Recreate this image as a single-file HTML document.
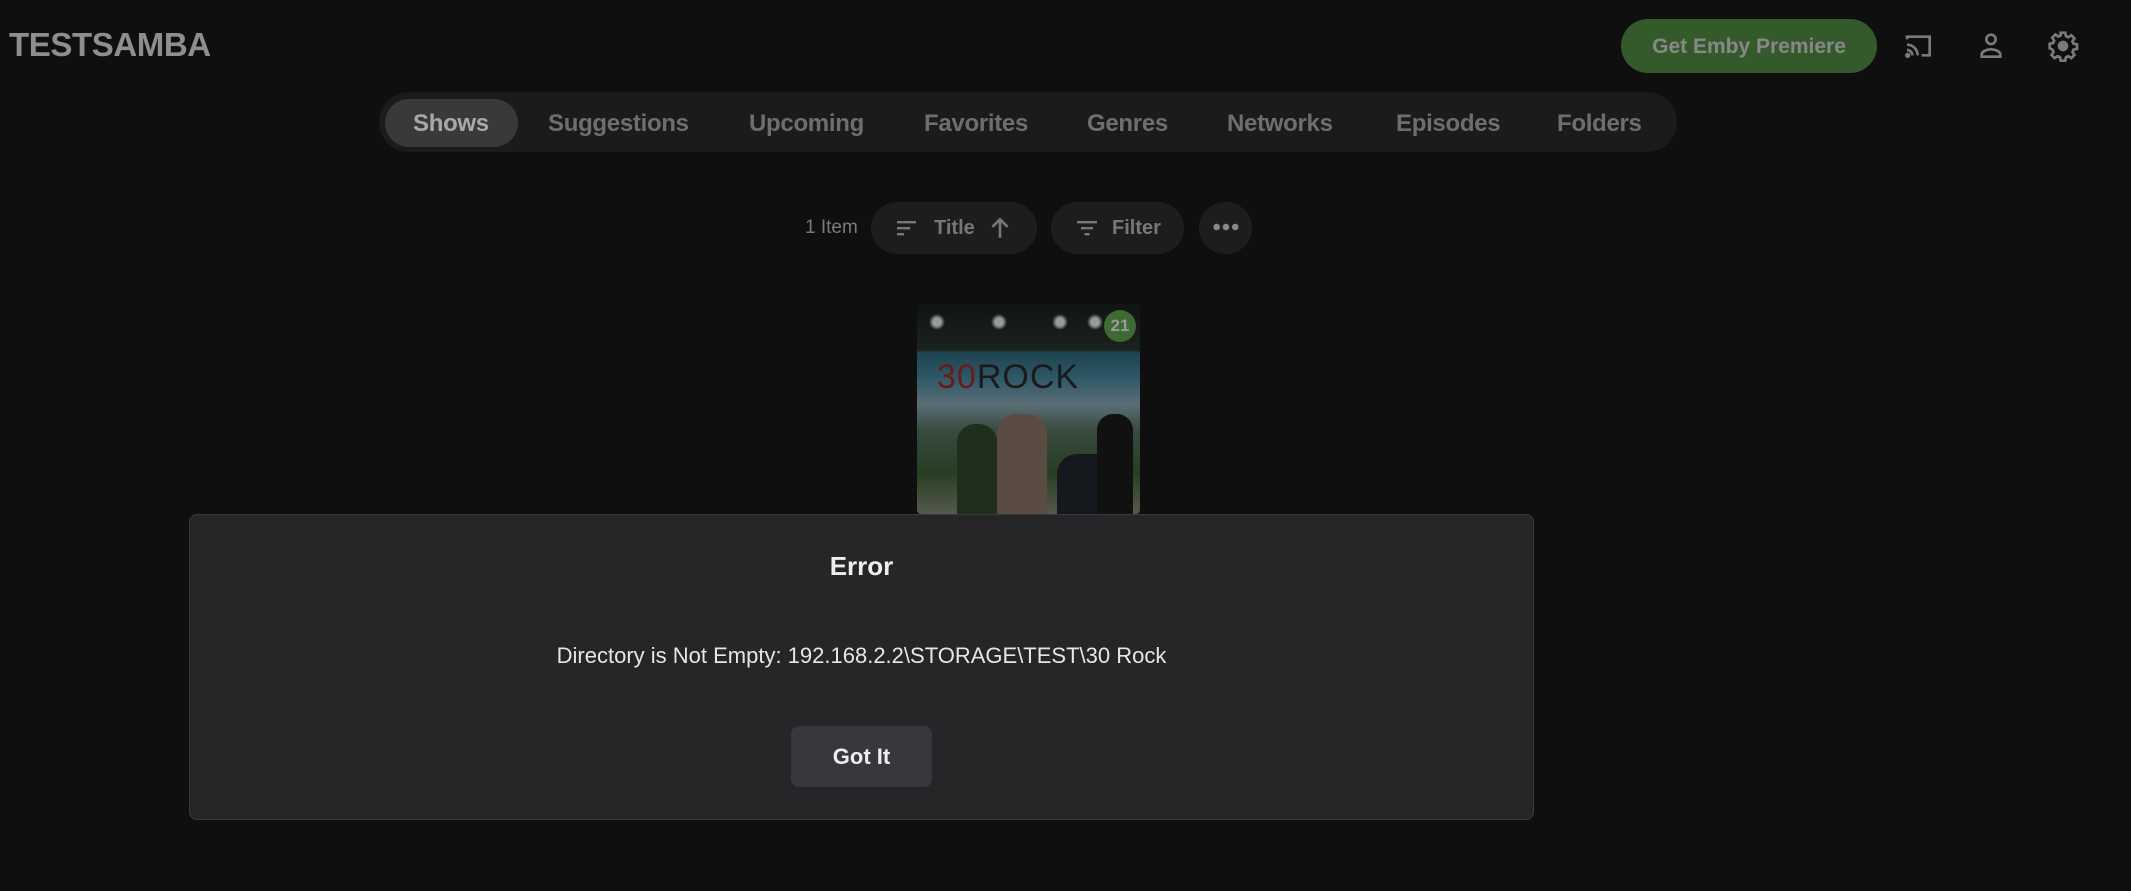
<!DOCTYPE html>
<html><head><meta charset="utf-8"><style>
*{margin:0;padding:0;box-sizing:border-box}
body{width:2131px;height:891px;background:#0f0f0f;font-family:"Liberation Sans",sans-serif;position:relative;overflow:hidden}
.a{position:absolute}
.logo{left:9px;top:26px;font-size:33px;font-weight:bold;color:#8e8e8e;letter-spacing:-0.4px}
.prem{left:1621px;top:19px;width:256px;height:54px;border-radius:27px;background:#345a2c;color:#888;font-weight:bold;font-size:21px;text-align:center;line-height:56px}
.tabs{left:379px;top:92px;width:1298px;height:60px;border-radius:30px;background:#1b1b1b}
.pill{left:385px;top:99px;width:133px;height:48px;border-radius:24px;background:#393939}
.tab{top:110px;font-size:24px;font-weight:bold;color:#6e6e6e;letter-spacing:-0.3px}
.btn{background:#1d1d1d;border-radius:26px;height:52px;top:202px}
.dlg{left:189px;top:514px;width:1345px;height:306px;background:#262628;border:1px solid #3a3a3d;border-radius:8px}
</style></head><body>
<div class="a logo">TESTSAMBA</div>
<div class="a prem">Get Emby Premiere</div>
<svg class="a" style="left:1903px;top:30px" width="32" height="32" viewBox="0 0 24 24" fill="none" stroke="#7a7a7a" stroke-width="2"><path d="M3 7V5h17v14h-6"/><path d="M3 11a8 8 0 0 1 8 8M3 15a4 4 0 0 1 4 4"/><circle cx="3.5" cy="19" r="1" fill="#7a7a7a"/></svg>
<svg class="a" style="left:1975px;top:30px" width="32" height="32" viewBox="0 0 24 24" fill="none" stroke="#7a7a7a" stroke-width="2"><circle cx="12" cy="7" r="3.5"/><path d="M5 20v-1.5C5 16 9 14.5 12 14.5s7 1.5 7 4V20z"/></svg>
<svg class="a" style="left:2047px;top:30px" width="32" height="32" viewBox="0 0 24 24" fill="none" stroke="#7a7a7a" stroke-width="2"><circle cx="12" cy="12" r="3" fill="#7a7a7a"/><path d="M10.3 2h3.4l.5 2.6 1.8.8 2.2-1.5 2.4 2.4-1.5 2.2.8 1.8 2.6.5v3.4l-2.6.5-.8 1.8 1.5 2.2-2.4 2.4-2.2-1.5-1.8.8-.5 2.6h-3.4l-.5-2.6-1.8-.8-2.2 1.5-2.4-2.4 1.5-2.2-.8-1.8L2 13.7v-3.4l2.6-.5.8-1.8-1.5-2.2 2.4-2.4 2.2 1.5 1.8-.8z"/></svg>
<div class="a tabs"></div>
<div class="a pill"></div>
<div class="a tab" style="left:413px;color:#a8a8a8">Shows</div>
<div class="a tab" style="left:548px">Suggestions</div>
<div class="a tab" style="left:749px">Upcoming</div>
<div class="a tab" style="left:924px">Favorites</div>
<div class="a tab" style="left:1087px">Genres</div>
<div class="a tab" style="left:1227px">Networks</div>
<div class="a tab" style="left:1396px">Episodes</div>
<div class="a tab" style="left:1557px">Folders</div>
<div class="a" style="left:805px;top:217px;font-size:19px;color:#7a7a7a">1 Item</div>
<div class="a btn" style="left:871px;width:166px"></div>
<div class="a btn" style="left:1051px;width:133px"></div>
<div class="a btn" style="left:1199px;width:53px"></div>
<svg class="a" style="left:894px;top:216px" width="26" height="24" viewBox="0 0 24 24" fill="#777"><rect x="2" y="5" width="19" height="2.4"/><rect x="2" y="11" width="13" height="2.4"/><rect x="2" y="17" width="7" height="2.4"/></svg>
<div class="a" style="left:934px;top:217px;font-size:20px;font-weight:bold;color:#777">Title</div>
<svg class="a" style="left:987px;top:215px" width="26" height="26" viewBox="0 0 24 24" fill="none" stroke="#777" stroke-width="2.4"><path d="M12 21V4M5 11l7-7 7 7"/></svg>
<svg class="a" style="left:1074px;top:216px" width="26" height="24" viewBox="0 0 24 24" fill="#777"><rect x="2" y="5" width="20" height="2.4"/><rect x="6" y="11" width="12" height="2.4"/><rect x="9.5" y="17" width="5" height="2.4"/></svg>
<div class="a" style="left:1112px;top:217px;font-size:20px;font-weight:bold;color:#777">Filter</div>
<div class="a" style="left:1212px;top:223px;width:28px;height:8px;background:radial-gradient(circle,#888 3px,transparent 3.5px) 0 0/9.3px 8px repeat-x"></div>
<div class="a" style="left:917px;top:304px;width:223px;height:210px;overflow:hidden;border-radius:4px;background:linear-gradient(#101512 0%,#1a2220 22%,#1d4450 23%,#2e5766 35%,#5a6e76 48%,#3a4a40 60%,#263e22 80%,#55594f 100%)">
<div class="a" style="left:0;top:0;width:223px;height:48px;background:radial-gradient(circle at 20px 18px,#999 4px,transparent 8px),radial-gradient(circle at 82px 18px,#999 4px,transparent 8px),radial-gradient(circle at 143px 18px,#999 4px,transparent 8px),radial-gradient(circle at 178px 18px,#999 4px,transparent 8px)"></div>
<div class="a" style="left:20px;top:54px;font-size:34px;letter-spacing:1px;color:#1a1a1a"><span style="color:#6a1a1a">30</span>ROCK</div>
<div class="a" style="left:40px;top:120px;width:40px;height:90px;background:#1f2f1d;border-radius:18px 18px 0 0"></div>
<div class="a" style="left:80px;top:110px;width:50px;height:100px;background:#5a4c42;border-radius:20px 20px 0 0"></div>
<div class="a" style="left:140px;top:150px;width:60px;height:60px;background:#15181c;border-radius:20px 20px 0 0"></div>
<div class="a" style="left:180px;top:110px;width:36px;height:100px;background:#111;border-radius:16px 16px 0 0"></div>
<div class="a" style="left:187px;top:6px;width:32px;height:32px;border-radius:50%;background:#3d6b33;color:#9a9a9a;font-size:17px;font-weight:bold;text-align:center;line-height:32px">21</div>
</div>
<div class="a dlg"></div>
<div class="a" style="left:189px;width:1345px;top:551px;text-align:center;font-size:26px;font-weight:bold;color:#eee">Error</div>
<div class="a" style="left:189px;width:1345px;top:643px;text-align:center;font-size:22px;color:#e6e6e6">Directory is Not Empty: 192.168.2.2\STORAGE\TEST\30 Rock</div>
<div class="a" style="left:791px;top:726px;width:141px;height:61px;border-radius:8px;background:#37383c;color:#eee;font-size:22px;font-weight:bold;text-align:center;line-height:61px">Got It</div>
</body></html>
